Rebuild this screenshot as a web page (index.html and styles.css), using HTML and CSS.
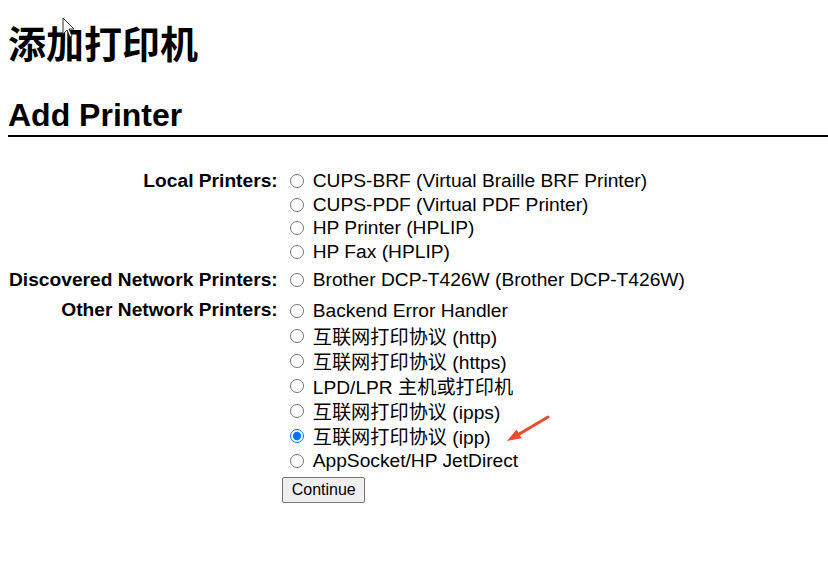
FILE: index.html
```html
<!DOCTYPE html>
<html lang="zh-CN">
<head>
<meta charset="utf-8">
<title>添加打印机</title>
<link rel="stylesheet" href="styles.css">
</head>
<body>
<h1 class="page-title">添加打印机</h1>
<h2 class="section-title">Add Printer</h2>
<form class="add-form">
<table class="printer-table">
<tr>
<th class="label">Local Printers:</th>
<td class="options local-rows">
<label class="opt"><input type="radio" name="dev">CUPS-BRF (Virtual Braille BRF Printer)</label>
<label class="opt"><input type="radio" name="dev">CUPS-PDF (Virtual PDF Printer)</label>
<label class="opt"><input type="radio" name="dev">HP Printer (HPLIP)</label>
<label class="opt"><input type="radio" name="dev">HP Fax (HPLIP)</label>
</td>
</tr>
<tr>
<th class="label">Discovered Network Printers:</th>
<td class="options discovered-rows">
<label class="opt"><input type="radio" name="dev">Brother DCP-T426W (Brother DCP-T426W)</label>
</td>
</tr>
<tr>
<th class="label">Other Network Printers:</th>
<td class="options cjk-rows">
<label class="opt"><input type="radio" name="dev">Backend Error Handler</label>
<label class="opt"><input type="radio" name="dev">互联网打印协议 (http)</label>
<label class="opt"><input type="radio" name="dev">互联网打印协议 (https)</label>
<label class="opt"><input type="radio" name="dev">LPD/LPR 主机或打印机</label>
<label class="opt"><input type="radio" name="dev">互联网打印协议 (ipps)</label>
<label class="opt"><input type="radio" name="dev" checked>互联网打印协议 (ipp)</label>
<label class="opt"><input type="radio" name="dev">AppSocket/HP JetDirect</label>
</td>
</tr>
<tr>
<th></th>
<td class="actions"><button type="button" class="continue">Continue</button></td>
</tr>
</table>
</form>
<svg class="red-arrow" width="55" height="36" viewBox="0 0 55 36">
<line x1="48" y1="7" x2="15" y2="26.5" stroke="#ef4a2a" stroke-width="3" stroke-linecap="round"/>
<polygon points="7,31 16.6,19.6 21.6,28.2" fill="#ef4a2a"/>
</svg>
<svg class="cursor" width="16" height="22" viewBox="0 0 16 22">
<path d="M1 1 L1 17 L5 13 L8 20 L10 19 L7 12 L12 12 Z" fill="#fff" stroke="#333" stroke-width="1"/>
</svg>
</body>
</html>
```
FILE: styles.css
```css
html, body {
  background: #fff;
}
body {
  margin: 0 0 0 8px;
  font-family: "Liberation Sans", "Noto Sans CJK SC", Arial, sans-serif;
  color: #000;
  position: relative;
}
.page-title {
  margin: 0;
  padding-top: 22px;
  font-size: 38px;
  line-height: 46px;
  font-weight: bold;
  font-family: "Liberation Sans", "Noto Sans CJK SC", sans-serif;
}
.section-title {
  margin: 28px 0 0 -2px;
  padding-left: 2px;
  font-size: 32px;
  line-height: 38px;
  font-weight: bold;
  border-bottom: 2px solid #000;
  padding-bottom: 1px;
}
.add-form {
  margin: 32px 0 0 1px;
}
.printer-table {
  border-collapse: collapse;
  font-size: 19.2px;
}
.printer-table th, .printer-table td {
  padding: 0;
  vertical-align: top;
}
.label {
  text-align: right;
  font-weight: bold;
  white-space: nowrap;
  padding-right: 4px !important;
  line-height: 24px;
}
.options {
  display: flex;
  flex-direction: column;
}
.local-rows {
  padding-bottom: 4px !important;
}
.discovered-rows {
  padding-bottom: 7px !important;
}
.opt {
  display: flex;
  align-items: center;
  height: 23.7px;
  white-space: nowrap;
}
.cjk-rows .opt {
  height: 25px;
}
.opt input {
  width: 14px;
  height: 14px;
  margin: 0 9px 0 8px;
}
.continue {
  margin: 4px 0 0 0;
  font-family: "Liberation Sans", Arial, sans-serif;
  font-size: 16px;
  padding: 0 9px;
  width: 83px;
  height: 26px;
  border: 1px solid #767676;
  border-radius: 2px;
  background: #efefef;
  color: #000;
}
.red-arrow {
  position: absolute;
  left: 492px;
  top: 410px;
}
.cursor {
  position: absolute;
  left: 54px;
  top: 17px;
}
```
